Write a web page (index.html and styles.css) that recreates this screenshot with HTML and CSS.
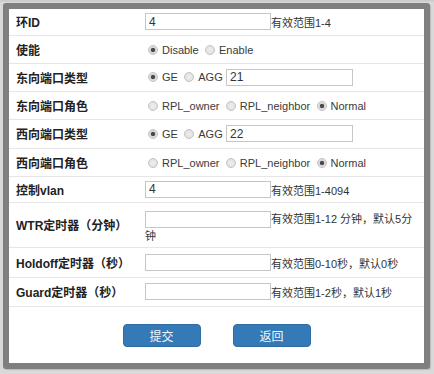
FILE: index.html
```html
<!DOCTYPE html>
<html lang="zh-CN">
<head>
<meta charset="utf-8">
<title>环配置</title>
<link rel="stylesheet" href="styles.css">
</head>
<body>
<div class="backdrop-strip"></div>
<div class="dialog">
  <table class="form">
    <tr class="r1">
      <th>环ID</th>
      <td><input class="txt" type="text" value="4"><span class="hint">有效范围1-4</span></td>
    </tr>
    <tr>
      <th>使能</th>
      <td><label class="opt"><input type="radio" name="en" checked>Disable</label> <label class="opt"><input type="radio" name="en">Enable</label></td>
    </tr>
    <tr>
      <th>东向端口类型</th>
      <td><label class="opt"><input type="radio" name="et" checked>GE</label> <label class="opt"><input type="radio" name="et">AGG</label> <input class="txt wide" type="text" value="21"></td>
    </tr>
    <tr>
      <th>东向端口角色</th>
      <td><label class="opt"><input type="radio" name="er">RPL_owner</label> <label class="opt"><input type="radio" name="er">RPL_neighbor</label> <label class="opt"><input type="radio" name="er" checked>Normal</label></td>
    </tr>
    <tr class="r5">
      <th>西向端口类型</th>
      <td><label class="opt"><input type="radio" name="wt" checked>GE</label> <label class="opt"><input type="radio" name="wt">AGG</label> <input class="txt wide" type="text" value="22"></td>
    </tr>
    <tr>
      <th>西向端口角色</th>
      <td><label class="opt"><input type="radio" name="wr">RPL_owner</label> <label class="opt"><input type="radio" name="wr">RPL_neighbor</label> <label class="opt"><input type="radio" name="wr" checked>Normal</label></td>
    </tr>
    <tr class="r7">
      <th>控制vlan</th>
      <td><input class="txt" type="text" value="4"><span class="hint">有效范围1-4094</span></td>
    </tr>
    <tr class="r8">
      <th>WTR定时器（分钟）</th>
      <td class="wrap"><input class="txt" type="text" value=""><span class="hint">有效范围1-12 分钟，默认5分钟</span></td>
    </tr>
    <tr class="r9">
      <th>Holdoff定时器（秒）</th>
      <td><input class="txt" type="text" value=""><span class="hint">有效范围0-10秒，默认0秒</span></td>
    </tr>
    <tr class="r10">
      <th>Guard定时器（秒）</th>
      <td><input class="txt" type="text" value=""><span class="hint">有效范围1-2秒，默认1秒</span></td>
    </tr>
  </table>
  <div class="actions">
    <button class="btn" type="button">提交</button>
    <button class="btn" type="button">返回</button>
  </div>
</div>
</body>
</html>
```

FILE: styles.css
```css
html, body {
  margin: 0;
  padding: 0;
}
body {
  background: #d9d9d9;
  font-family: "Liberation Sans", Arial, "Noto Sans CJK SC", sans-serif;
  font-size: 12px;
  color: #333;
  width: 434px;
  height: 374px;
  overflow: hidden;
}
.backdrop-strip {
  height: 3px;
  background: linear-gradient(to bottom, #c8c8c8, #d9d9d9);
}
.dialog {
  margin-left: 3px;
  width: 415px;
  height: 354px;
  border: 6px solid #7f7f7f;
  border-radius: 3px;
  background: #fff;
  box-shadow: 1px 1px 1px rgba(0,0,0,0.15);
}
.form {
  width: 100%;
  border-collapse: collapse;
  table-layout: fixed;
}
.form tr {
  height: 28px;
  border-bottom: 1px solid #e6e6e6;
}
.form tr.r1 { height: 26px; }
.form tr.r5 { height: 29px; }
.form tr.r7 { height: 26px; }
.form tr.r8 { height: 45px; }
.form tr.r9 { height: 30px; }
.form tr.r10 { height: 29px; }
.form th {
  width: 122px;
  padding: 0 0 0 7px;
  text-align: left;
  font-weight: bold;
  font-size: 12px;
  color: #222;
  white-space: nowrap;
}
.form td {
  padding: 0 6px 0 7px;
  white-space: nowrap;
}
.form td.wrap {
  white-space: normal;
  padding-top: 8px;
  vertical-align: top;
  line-height: 17px;
}
.txt {
  box-sizing: border-box;
  width: 126px;
  height: 17px;
  margin: 0;
  padding: 0 3px;
  border: 1px solid #c6c6c6;
  font-family: "Liberation Sans", Arial, sans-serif;
  font-size: 12px;
  color: #333;
  vertical-align: middle;
  outline: none;
}
.txt.wide {
  width: 127px;
}
.hint {
  font-size: 11px;
  vertical-align: middle;
}
.opt {
  font-size: 11px;
  color: #3a3a3a;
  vertical-align: middle;
}
.opt input {
  -webkit-appearance: none;
  appearance: none;
  box-sizing: border-box;
  width: 10px;
  height: 10px;
  margin: 0 4px 0 3px;
  border: 1px solid #c4c4c4;
  border-radius: 50%;
  background: radial-gradient(circle, #eeeeee 0, #dcdcdc 100%);
  vertical-align: -1px;
}
.opt input:checked {
  background: radial-gradient(circle, #4a4a4a 0, #4a4a4a 1.8px, #dadada 2.6px, #e6e6e6 100%);
}
.actions {
  display: flex;
  justify-content: center;
  gap: 32px;
  padding-top: 17px;
}
.btn {
  width: 78px;
  height: 23px;
  border: 1px solid #2e6da4;
  border-radius: 4px;
  background: #337ab7;
  color: #f2f6fb;
  font-family: "Noto Sans CJK SC", sans-serif;
  font-size: 12px;
  padding: 0;
}
```
